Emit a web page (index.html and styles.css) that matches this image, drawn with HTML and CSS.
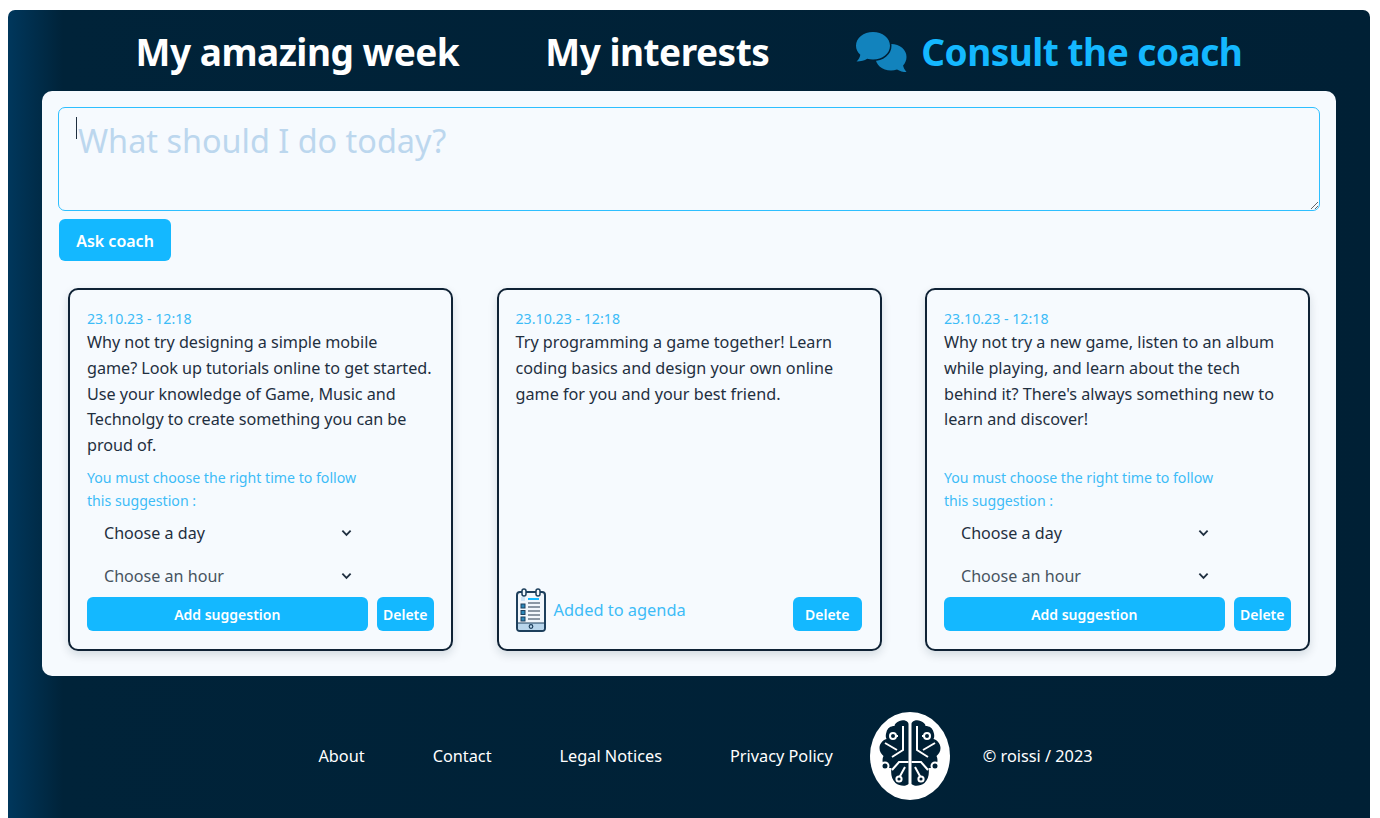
FILE: index.html
```html
<!DOCTYPE html>
<html lang="en">
<head>
<meta charset="utf-8">
<title>Consult the coach</title>
<link rel="stylesheet" href="styles.css">
</head>
<body>
<div class="frame">
  <nav class="nav">
    <a class="nav-link">My amazing week</a>
    <a class="nav-link">My interests</a>
    <a class="nav-link active">
      <svg class="chat-icon" viewBox="0 0 52 42" aria-hidden="true">
        <path class="chat-bubble" d="M36 13c9 0 15.500 5.800 15.500 13 0 3.300-1.300 6.200-3.400 8.500.3 2 1.500 4.200 3.400 6.500-3.400 0-6.800-1-9.500-2.600-1.900.7-4 1.100-6 1.100-9 0-15.500-5.800-15.500-13S27 13 36 13z"/>
        <path class="chat-bubble front" d="M18 1c9.500 0 17 6 17 13.800S27.500 28.600 18 28.600c-2 0-4-.3-5.800-.8C9.500 29.700 6 30.500 1.500 30.500c2.300-2.200 3.500-4.500 3.800-6.800C2.400 21.100 1 18.100 1 14.800 1 7 8.500 1 18 1z"/>
      </svg>
      Consult the coach
    </a>
  </nav>

  <main class="panel">
    <div class="ask">
      <textarea class="ask-input" placeholder="What should I do today?"></textarea>
      <span class="caret"></span>
    </div>
    <button class="ask-btn">Ask coach</button>

    <section class="cards">
      <article class="card">
        <time class="stamp">23.10.23 - 12:18</time>
        <p class="body set-lines">Why not try designing a simple mobile<br>game? Look up tutorials online to get started.<br>Use your knowledge of Game, Music and<br>Technolgy to create something you can be<br>proud of.</p>
        <div class="bottom">
          <p class="hint">You must choose the right time to follow<br>this suggestion :</p>
          <select class="pick"><option>Choose a day</option></select>
          <select class="pick hour"><option>Choose an hour</option></select>
          <div class="actions">
            <button class="btn grow">Add suggestion</button>
            <button class="btn">Delete</button>
          </div>
        </div>
      </article>

      <article class="card">
        <time class="stamp">23.10.23 - 12:18</time>
        <p class="body">Try programming a game together! Learn coding basics and design your own online game for you and your best friend.</p>
        <div class="bottom">
          <div class="actions added">
            <svg class="agenda" viewBox="0 0 30 44" aria-hidden="true">
              <rect x="1" y="4" width="28" height="39" rx="3" fill="#f2f7fc" stroke="#1d3f5c" stroke-width="2"/>
              <path d="M2 35h26v5a2 2 0 0 1-2 2H4a2 2 0 0 1-2-2z" fill="#b9d6ec"/>
              <path d="M2 35h26" stroke="#1d3f5c" stroke-width="1"/>
              <rect x="6" y="1" width="4" height="7" rx="2" fill="#f2f7fc" stroke="#1d3f5c" stroke-width="1.500"/>
              <rect x="20" y="1" width="4" height="7" rx="2" fill="#f2f7fc" stroke="#1d3f5c" stroke-width="1.500"/>
              <path d="M12 11h11" stroke="#14b8ff" stroke-width="2"/>
              <path d="M12 15h12M12 19h12M12 23h12M12 27h12M12 31h12" stroke="#6a7887" stroke-width="1.300"/>
              <rect x="5" y="9" width="4" height="4" fill="#cfe5f6"/>
              <rect x="5" y="16" width="4" height="4" fill="#2b87b9" stroke="#1d3f5c"/>
              <rect x="5" y="22.500" width="4" height="4" fill="#2b87b9" stroke="#1d3f5c"/>
              <rect x="5" y="29" width="4" height="4" fill="#2b87b9" stroke="#1d3f5c"/>
              <circle cx="15" cy="38.500" r="1.800" fill="none" stroke="#1d3f5c" stroke-width="1.200"/>
            </svg>
            <span class="added-text">Added to agenda</span>
            <button class="btn push">Delete</button>
          </div>
        </div>
      </article>

      <article class="card">
        <time class="stamp">23.10.23 - 12:18</time>
        <p class="body">Why not try a new game, listen to an album while playing, and learn about the tech behind it? There's always something new to learn and discover!</p>
        <div class="bottom">
          <p class="hint">You must choose the right time to follow<br>this suggestion :</p>
          <select class="pick"><option>Choose a day</option></select>
          <select class="pick hour"><option>Choose an hour</option></select>
          <div class="actions">
            <button class="btn grow">Add suggestion</button>
            <button class="btn">Delete</button>
          </div>
        </div>
      </article>
    </section>
  </main>

  <footer class="footer">
    <a class="foot-link">About</a>
    <a class="foot-link">Contact</a>
    <a class="foot-link">Legal Notices</a>
    <a class="foot-link">Privacy Policy</a>
    <svg class="logo" viewBox="0 0 80 88" aria-hidden="true">
      <ellipse cx="40" cy="44" rx="40" ry="44" fill="#fff"/>
      <path class="brain" d="M38.500 12c0-3-5-5-9-3-3 1-5 3-5 5-4 0-7 2-8 6-1 3-1 5 0 7-4 1-7 5-7 9 0 4 2 6 4 8-2 4-1 9 3 11 2 1 3 1 5 1-1 6 0 11 4 15 4 3 10 4 13 1z"/>
      <path class="brain" d="M41.500 12c0-3 5-5 9-3 3 1 5 3 5 5 4 0 7 2 8 6 1 3 1 5 0 7 4 1 7 5 7 9 0 4-2 6-4 8 2 4 1 9-3 11-2 1-3 1-5 1 1 6 0 11-4 15-4 3-10 4-13 1z"/>
      <path class="trace" d="M33 14v24l-11 7M15 31l12 7M23 24h5M38.500 50H29l-7 8M35 55l-6 11M47 14v24l11 7M65 31l-12 7M57 24h-5M41.500 50H51l7 8M45 55l6 11"/>
      <g class="nodes">
        <circle cx="23" cy="24" r="3"/><circle cx="57" cy="24" r="3"/>
        <circle cx="15" cy="54" r="3.500"/><circle cx="65" cy="54" r="3.500"/>
        <circle cx="29" cy="67" r="2.600"/><circle cx="51" cy="67" r="2.600"/>
      </g>
    </svg>
    <span class="copy">© roissi / 2023</span>
  </footer>
</div>
</body>
</html>
```

FILE: styles.css
```css
* {
  box-sizing: border-box;
}

html,
body {
  height: 100%;
}

body {
  margin: 0;
  padding: 10px 10px 0 8px;
  background: #fff;
  font-family: "Noto Sans", "Open Sans", "Liberation Sans", sans-serif;
  color: #1f2f40;
  overflow: hidden;
}

.frame {
  height: 808px;
  padding: 0 34px;
  border-radius: 7px 7px 0 0;
  background: linear-gradient(90deg, #00375c 0, #002339 55px, #002035 100%);
}

/* top navigation */
.nav {
  height: 81px;
  display: flex;
  align-items: center;
  justify-content: center;
  gap: 86px;
  padding-top: 2px;
}

.nav-link {
  display: flex;
  align-items: center;
  font-size: 37px;
  font-weight: 700;
  color: #fff;
  letter-spacing: -0.5px;
}

.nav-link.active {
  color: #14b8ff;
}

.chat-icon {
  width: 52px;
  height: 42px;
  margin-right: 14px;
}

.chat-bubble {
  fill: #1283bd;
}

.chat-bubble.front {
  stroke: #002035;
  stroke-width: 3;
  paint-order: stroke;
}

/* main panel */
.panel {
  height: 585px;
  padding: 16px;
  background: #f6fafe;
  border-radius: 10px;
}

.ask {
  position: relative;
  height: 104px;
}

.ask-input {
  display: block;
  width: 100%;
  height: 100%;
  padding: 10px 19px;
  border: 1px solid #2ebfff;
  border-radius: 7px;
  outline: none;
  background: transparent;
  font: 32.400px/1.4 "Noto Sans", "Open Sans", sans-serif;
  color: #1f2f40;
}

.ask-input::placeholder {
  color: #bcd7ee;
  opacity: 1;
}

.caret {
  position: absolute;
  left: 18px;
  top: 10px;
  width: 1px;
  height: 22px;
  background: #1f2f40;
}

.ask-btn {
  display: block;
  width: 112px;
  height: 42px;
  margin: 8px 0 0 1px;
  padding: 2px 0 0;
  border: 0;
  border-radius: 6px;
  background: #14b8ff;
  color: #fff;
  font: 600 16px "Noto Sans", "Open Sans", sans-serif;
}

/* suggestion cards */
.cards {
  display: grid;
  grid-template-columns: repeat(3, 385px);
  justify-content: space-between;
  margin-top: 27px;
  padding: 0 10px;
}

.card {
  height: 363px;
  display: flex;
  flex-direction: column;
  padding: 20px 17px 18px;
  border: 2px solid #0f2235;
  border-radius: 10px;
  box-shadow: 0 4px 10px rgba(0, 32, 53, 0.14);
}

.stamp {
  font-size: 14.200px;
  line-height: 18px;
  color: #3dbcf7;
}

.body {
  margin: 2px 0 0;
  font-size: 16.200px;
  line-height: 25.750px;
  color: #1f2f40;
}

.set-lines {
  white-space: nowrap;
  letter-spacing: -0.04px;
}

.bottom {
  margin-top: auto;
}

.hint {
  margin: 0 0 4px;
  font-size: 14.150px;
  line-height: 22.500px;
  color: #3dbcf7;
}

.pick {
  display: block;
  width: 275px;
  height: 34px;
  margin-bottom: 9px;
  padding: 0 0 0 17px;
  border: 0;
  appearance: none;
  background: transparent url("data:image/svg+xml,%3Csvg xmlns='http://www.w3.org/2000/svg' viewBox='0 0 12 8'%3E%3Cpath d='M1.500 1.500 6 6l4.500-4.500' fill='none' stroke='%231f2f40' stroke-width='2'/%3E%3C/svg%3E") no-repeat right 10px center / 11px 8px;
  font: 16.100px "Noto Sans", "Open Sans", sans-serif;
  color: #1f2f40;
}

.pick.hour {
  margin-bottom: 4px;
  color: #46535f;
}

.actions {
  display: flex;
  gap: 9px;
}

.btn {
  height: 34px;
  padding: 0 6.500px;
  border: 0;
  border-radius: 6px;
  background: #14b8ff;
  color: #fff;
  font: 600 14px "Noto Sans", "Open Sans", sans-serif;
}

.grow {
  flex: 1;
}

.added {
  align-items: flex-end;
}

.agenda {
  width: 30px;
  height: 44px;
  margin-bottom: -1px;
}

.added-text {
  align-self: center;
  margin-left: -1px;
  font-size: 16.400px;
  color: #3dbcf7;
}

.push {
  margin-left: auto;
  margin-right: 1px;
  padding: 0 12px;
}

/* footer */
.footer {
  height: 142px;
  display: flex;
  align-items: center;
  justify-content: center;
  padding: 17px 0 0 33px;
  color: #fff;
  font-size: 16.300px;
}

.foot-link {
  margin-right: 68px;
}

.foot-link:nth-child(4) {
  margin-right: 37px;
}

.logo {
  width: 80px;
  height: 88px;
  margin-right: 33px;
}

.brain {
  fill: #002035;
}

.trace {
  fill: none;
  stroke: #fff;
  stroke-width: 2;
}

.nodes circle {
  fill: #002035;
  stroke: #fff;
  stroke-width: 2;
}
```
